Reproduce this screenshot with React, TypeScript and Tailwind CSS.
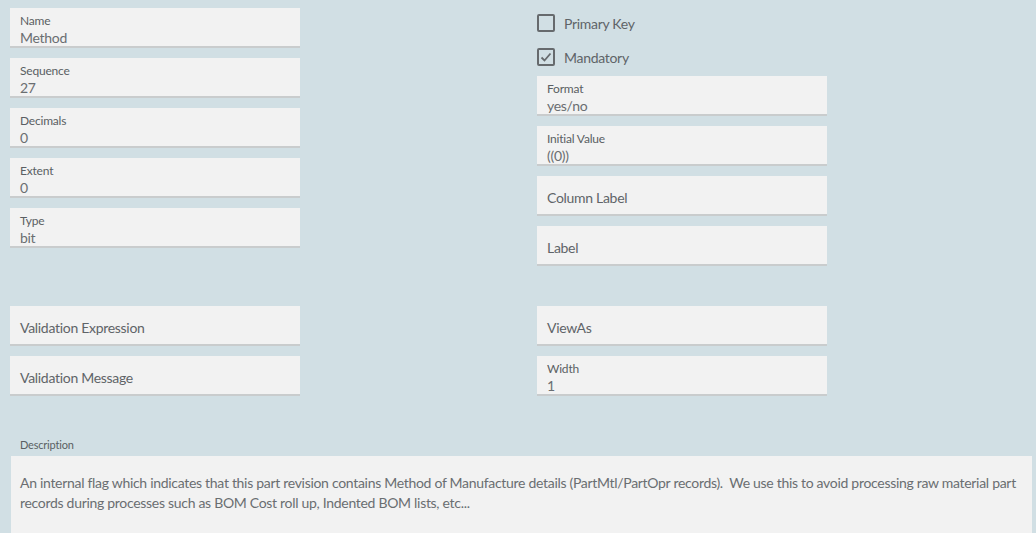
import React from "react";

const font = { fontFamily: "Lato, 'Open Sans', sans-serif" };

function Field({ label, value }: { label: string; value?: string }) {
  if (value === undefined) {
    return (
      <div className="flex h-10 w-[290px] items-center border-b-2 border-[#c9cccd] bg-[#f2f2f2] px-[10px] pt-[4px]">
        <span className="text-[14px] tracking-[-0.3px] text-[#5f6468]">{label}</span>
      </div>
    );
  }
  return (
    <div className="h-10 w-[290px] border-b-2 border-[#c9cccd] bg-[#f2f2f2] px-[10px] pt-[5px]">
      <div className="text-[12px] leading-[16px] tracking-[-0.2px] text-[#5a5f63]">{label}</div>
      <div className="text-[14px] leading-[17px] tracking-[-0.3px] text-[#6a6e71]">{value}</div>
    </div>
  );
}

function Check({ label, checked }: { label: string; checked?: boolean }) {
  return (
    <div className="flex h-[24px] items-center gap-[9px]">
      <span className="flex h-[18px] w-[18px] items-center justify-center rounded-[2px] border-2 border-[#666a6d]">
        {checked && (
          <svg width="14" height="14" viewBox="0 0 14 14" fill="none">
            <path d="M2.5 7.5 L5.5 10.5 L11.5 3.5" stroke="#666a6d" strokeWidth="1.8" />
          </svg>
        )}
      </span>
      <span className="text-[14px] tracking-[-0.3px] text-[#5f6468]">{label}</span>
    </div>
  );
}

export default function App() {
  return (
    <div className="h-[533px] w-[1036px] overflow-hidden bg-[#d1dfe4]" style={font}>
      <div className="flex gap-[237px] pl-[10px] pt-[8px]">
        <div className="flex flex-col gap-[10px]">
          <Field label="Name" value="Method" />
          <Field label="Sequence" value="27" />
          <Field label="Decimals" value="0" />
          <Field label="Extent" value="0" />
          <Field label="Type" value="bit" />
          <div className="mt-[48px] flex flex-col gap-[10px]">
            <Field label="Validation Expression" />
            <Field label="Validation Message" />
          </div>
        </div>
        <div className="flex flex-col gap-[10px]">
          <div className="flex flex-col gap-[10px] pt-[3px]">
            <Check label="Primary Key" />
            <Check label="Mandatory" checked />
          </div>
          <div className="-mt-[3px] flex flex-col gap-[10px]">
            <Field label="Format" value="yes/no" />
            <Field label="Initial Value" value="((0))" />
            <Field label="Column Label" />
            <Field label="Label" />
          </div>
          <div className="mt-[30px] flex flex-col gap-[10px]">
            <Field label="ViewAs" />
            <Field label="Width" value="1" />
          </div>
        </div>
      </div>
      <div className="pl-[20px] pt-[42px] text-[11px] leading-[14px] tracking-[-0.2px] text-[#5a5f63]">Description</div>
      <div className="ml-[11px] mt-[4px] h-[100px] w-[1021px] bg-[#f2f2f2] px-[9px] pt-[17px] text-[14px] leading-[20px] tracking-[-0.3px] text-[#6a6e71]">
        An internal flag which indicates that this part revision contains Method of Manufacture details (PartMtl/PartOpr records).&nbsp; We use this to avoid processing raw material part records during processes such as BOM Cost roll up, Indented BOM lists, etc...
      </div>
    </div>
  );
}
